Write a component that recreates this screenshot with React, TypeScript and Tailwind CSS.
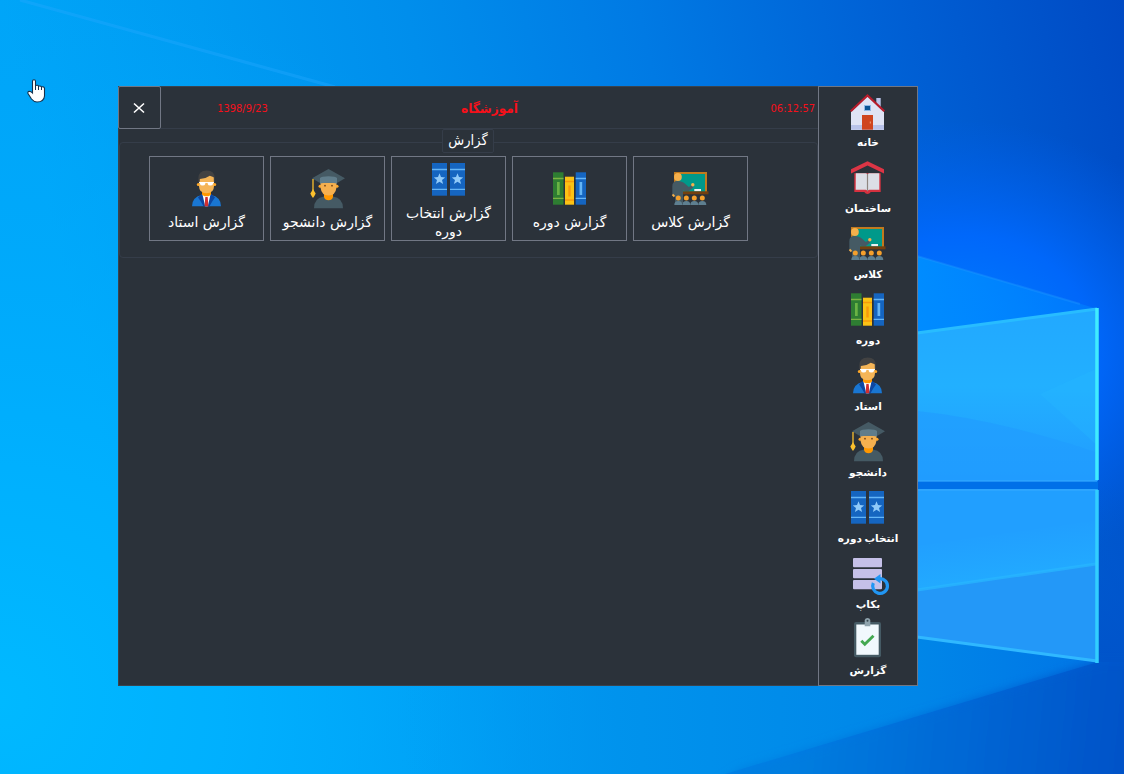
import type { ReactNode } from "react";

function Icon({ children }: { children: ReactNode }) {
  return (
    <svg width="40" height="40" viewBox="0 0 40 40" className="block shrink-0 overflow-visible">
      {children}
    </svg>
  );
}

function HomeIcon() {
  return (
    <Icon>
      <path d="M28.3 6h4.4v10h-4.4z" fill="#b9c3ea" />
      <path d="M19.5 4L3 19.5V38h33V19.5z" fill="#dfe3f5" />
      <path d="M3 33h33v4.7H3z" fill="#b9c3ea" />
      <path d="M14 23h11v14.7H14z" fill="#cf4520" />
      <path d="M22.3 29.5v2" stroke="#f3a27c" strokeWidth="1" />
      <path d="M16 13h7v6h-7z" fill="#8fb8e8" />
      <path d="M17 14h5v4h-5z" fill="#0b5394" />
      <path d="M2.7 19.2L19.5 3.4l16.8 15.8" fill="none" stroke="#b71c2c" strokeWidth="2.2" />
    </Icon>
  );
}

function BuildingIcon() {
  return (
    <Icon>
      <path d="M3 11.3l16.5-8 16.5 8v4.2l-16.5-8-16.5 8z" fill="#dc3545" />
      <path d="M6.3 15.3h26.4V34h-9.9q-1.5 1.9-3.3 1.9T16.2 34H6.3z" fill="#d5313f" />
      <path d="M7.8 15.2h10q1.7 0 1.7 1.6 0-1.6 1.7-1.6h10.1v16.5h-10q-1.8 0-1.8 1.8 0-1.8-1.8-1.8h-10z" fill="#dcdee6" />
      <path d="M19.5 16v17" stroke="#8f8580" strokeWidth="1.2" />
    </Icon>
  );
}

function ClassIcon() {
  return (
    <Icon>
      <path d="M3 3h33v20H3z" fill="#c17a1e" />
      <path d="M5 5h29v18H5z" fill="#00998a" />
      <path d="M1.3 26V17.500q0-5.500 5-5.500 5 0 7.500 2.500l4 3.500 3-2 1.500 2.500-4.500 3.500q-3 .5-5.800-.5V34H4V26z" fill="#455a64" />
      <circle cx="6.900" cy="8" r="3.900" fill="#f5b04c" />
      <circle cx="21.800" cy="15.700" r="1.700" fill="#f5b04c" />
      <path d="M1.500 25.500l2 2" stroke="#f5b04c" strokeWidth="1.800" />
      <path d="M23.300 20H30v2.300h-6.700z" fill="#eceff1" />
      <path d="M12 22.300h25.500v3H12z" fill="#74400f" />
      {[7.3, 15.3, 23.3, 31.3].map((x) => (
        <g key={x} transform={`translate(${x} 29)`}>
          <circle r="2.500" fill="#f5a02c" />
          <path d="M-4 7q0-4 4-4t4 4z" fill="#5e7f90" />
        </g>
      ))}
    </Icon>
  );
}

function CourseIcon() {
  return (
    <Icon>
      <path d="M3 3.300h10.500v32.400H3z" fill="#2e7d32" />
      <path d="M3 9.500h10.500M3 29.300h10.500" stroke="#7cb342" strokeWidth="1.300" />
      <path d="M7 13h2.700v13H7z" fill="#6ab344" />
      <path d="M15 7.700h9v28h-9z" fill="#fbc215" />
      <path d="M15 12.500h9M15 31h9" stroke="#f79a0b" strokeWidth="1.500" />
      <path d="M18.300 16.500h2.400v11h-2.400z" fill="#f79a0b" />
      <path d="M25.700 3.300H36v32.400H25.700z" fill="#1565c0" />
      <path d="M25.700 9.500H36M25.700 29.300H36" stroke="#64b5f6" strokeWidth="1.300" />
      <path d="M29.500 13h2.700v13h-2.700z" fill="#64b5f6" />
    </Icon>
  );
}

function TeacherIcon() {
  return (
    <Icon>
      <path d="M5 37.300q0-9 9.500-11.300h10Q34 28.300 34 37.300z" fill="#1976d2" />
      <path d="M14.500 25h10l3.500 3.500-2.500 3.500-3 5.300h-6L13.500 32 11 28.500z" fill="#0d47a1" />
      <path d="M15.500 25.500h8l-2.700 11.800h-2.600z" fill="#fff" />
      <path d="M18.300 28h2.400l.7 9.300h-3.800z" fill="#d32f2f" />
      <path d="M15 20h9v5.700l-2.500 1.600h-4L15 25.700z" fill="#ff9800" />
      <circle cx="11.300" cy="15.500" r="1.500" fill="#ffa726" />
      <circle cx="27.700" cy="15.500" r="1.500" fill="#ffa726" />
      <path d="M12 9q0-4 7.500-4T27 9v8q0 7.300-7.500 7.300T12 17z" fill="#f5b557" />
      <path d="M11.300 13.500V9.500q0-8 8.500-8 8 0 8 8v4l-1-1V8.300l-4-1.500q-4 3-10 3.300v2.500z" fill="#424242" />
      <path d="M12 13h15v.9H12z" fill="#fff" />
      <path d="M13 13h5.300v2q-.5 1.500-2.700 1.500T13 15zM20.700 13H26v2q-.5 1.500-2.700 1.500T20.700 15z" fill="#fff" />
    </Icon>
  );
}

function StudentIcon() {
  return (
    <Icon>
      <path d="M6 39.300Q6 29 16 27.500h9Q35 29 35 39.300z" fill="#455a64" />
      <path d="M16 23h9v5q-1 3.200-4.500 3.200T16 28z" fill="#ff9800" />
      <circle cx="12" cy="17.300" r="1.500" fill="#ffa726" />
      <circle cx="29" cy="17.300" r="1.500" fill="#ffa726" />
      <path d="M12.500 12h16v6.500q-1 8-8 8t-8-8z" fill="#f5b04f" />
      <path d="M4 9.300L20.500 0 37 9.300l-7.500 4.500h-18z" fill="#455a64" />
      <path d="M12 9q1.500-1.800 8.500-1.800T29 9v5.500q-3-.8-8.500-.8t-8.500.8z" fill="#607d8b" />
      <circle cx="17" cy="16.700" r=".9" fill="#784719" />
      <circle cx="24" cy="16.700" r=".9" fill="#784719" />
      <path d="M5 10v12" stroke="#fbc02d" strokeWidth="1.300" />
      <path d="M5 20q1.300 2.500 2.700 4.500-.9 2.200-2.700 4.500-1.800-2.300-2.700-4.500Q3.700 22.500 5 20z" fill="#fbc02d" />
    </Icon>
  );
}

function SelectIcon() {
  return (
    <Icon>
      {[3, 21].map((x) => (
        <g key={x} transform={`translate(${x} 0)`}>
          <path d="M0 3h15v32.700H0z" fill="#1565c0" />
          <path d="M0 9.500h15M0 29.300h15" stroke="#64b5f6" strokeWidth="1.300" />
          <path d="M7.500 13.300l1.500 3.800 4.200.3-3.200 2.600 1.100 4.100-3.600-2.300-3.600 2.300 1.100-4.100-3.200-2.600 4.200-.3z" fill="#90caf9" />
        </g>
      ))}
    </Icon>
  );
}

function BackupIcon() {
  return (
    <Icon>
      {[4, 15, 26].map((y) => (
        <rect key={y} x="5" y={y} width="29" height="9.200" rx="1" fill="#c5c0e8" />
      ))}
      <path d="M25.300 29a7.400 7.400 0 1 0 6.700-4.400h-1" fill="none" stroke="#2196f3" strokeWidth="3.200" />
      <path d="M32.500 19.900v9.600L26 24.700z" fill="#2196f3" />
    </Icon>
  );
}

function ReportIcon() {
  return (
    <Icon>
      <rect x="6" y="2" width="27" height="35.300" rx="2" fill="#455a64" />
      <path d="M8.300 4.500h22.400v30.300H8.300z" fill="#f1f8fd" />
      <path d="M16.700 6.300V0q.6-2 2.800-2t2.800 2v6.300z" fill="#90a4ae" />
      <circle cx="19.500" cy=".8" r="1" fill="#37474f" />
      <path d="M13.300 20.800l3.500 3.500 8.700-8.500" fill="none" stroke="#43a851" strokeWidth="2.900" />
    </Icon>
  );
}

const menu = [
  { label: "خانه", icon: <HomeIcon /> },
  { label: "ساختمان", icon: <BuildingIcon /> },
  { label: "کلاس", icon: <ClassIcon /> },
  { label: "دوره", icon: <CourseIcon /> },
  { label: "استاد", icon: <TeacherIcon /> },
  { label: "دانشجو", icon: <StudentIcon /> },
  { label: "انتخاب دوره", icon: <SelectIcon /> },
  { label: "بکاپ", icon: <BackupIcon /> },
  { label: "گزارش", icon: <ReportIcon /> },
];

const reports = [
  { lines: ["گزارش استاد"], icon: <TeacherIcon /> },
  { lines: ["گزارش دانشجو"], icon: <StudentIcon /> },
  { lines: ["گزارش انتخاب", "دوره"], icon: <SelectIcon /> },
  { lines: ["گزارش دوره"], icon: <CourseIcon /> },
  { lines: ["گزارش کلاس"], icon: <ClassIcon /> },
];

function Wallpaper() {
  return (
    <svg className="absolute inset-0" width="1124" height="774" viewBox="0 0 1124 774">
      <defs>
        <linearGradient id="base" gradientUnits="userSpaceOnUse" x1="0" y1="0" x2="1100" y2="-250">
          <stop offset="0" stopColor="#00a5f8" />
          <stop offset=".17" stopColor="#009bf2" />
          <stop offset=".35" stopColor="#008eec" />
          <stop offset=".55" stopColor="#007ae4" />
          <stop offset=".75" stopColor="#0062d6" />
          <stop offset=".97" stopColor="#004ac4" />
        </linearGradient>
        <radialGradient id="corner" gradientUnits="userSpaceOnUse" cx="0" cy="700" r="720">
          <stop offset="0" stopColor="#00b9ff" />
          <stop offset=".3" stopColor="#00b2ff" stopOpacity=".9" />
          <stop offset="1" stopColor="#00a8fc" stopOpacity="0" />
        </radialGradient>
        <radialGradient id="glow" gradientUnits="userSpaceOnUse" cx="0" cy="0" r="1" gradientTransform="translate(960 350) scale(270 230)">
          <stop offset="0" stopColor="#0080ff" />
          <stop offset=".5" stopColor="#0069ff" stopOpacity=".9" />
          <stop offset="1" stopColor="#0060f0" stopOpacity="0" />
        </radialGradient>
        <linearGradient id="beam" x1="0" y1="0" x2="1" y2="0">
          <stop offset="0" stopColor="#008cff" />
          <stop offset="1" stopColor="#0086ff" stopOpacity=".5" />
        </linearGradient>
        <linearGradient id="shade" gradientUnits="userSpaceOnUse" x1="790" y1="740" x2="1124" y2="774">
          <stop offset="0" stopColor="#007ee0" />
          <stop offset=".5" stopColor="#0068d5" />
          <stop offset="1" stopColor="#0052c8" />
        </linearGradient>
        <linearGradient id="lower" gradientUnits="userSpaceOnUse" x1="400" y1="0" x2="1090" y2="0">
          <stop offset="0" stopColor="#00a0f4" stopOpacity="0" />
          <stop offset=".35" stopColor="#0092ec" />
          <stop offset=".75" stopColor="#0086e8" />
          <stop offset="1" stopColor="#0076e6" />
        </linearGradient>
        <linearGradient id="fade" x1="0" y1="0" x2="0" y2="1">
          <stop offset="0" stopColor="#0058d0" stopOpacity="0" />
          <stop offset="1" stopColor="#0054ca" />
        </linearGradient>
        <linearGradient id="pane" x1="0" y1="0" x2="0" y2="1">
          <stop offset="0" stopColor="#22a8ff" />
          <stop offset=".45" stopColor="#22b0ff" />
          <stop offset="1" stopColor="#219bff" />
        </linearGradient>
        <linearGradient id="sheen" gradientUnits="userSpaceOnUse" x1="1000" y1="530" x2="1006" y2="576">
          <stop offset="0" stopColor="#22aaff" stopOpacity="0" />
          <stop offset="1" stopColor="#22acff" stopOpacity=".8" />
        </linearGradient>
        <filter id="soften" x="-10%" y="-20%" width="120%" height="140%">
          <feGaussianBlur stdDeviation="5" />
        </filter>
      </defs>
      <path d="M0 0h1124v774H0z" fill="url(#base)" />
      <path d="M0 0h1124v774H0z" fill="url(#corner)" />
      <path d="M0 0h1124v774H0z" fill="url(#glow)" />
      <path d="M20 0L335 87" stroke="#25a8ff" strokeWidth="3" opacity=".4" />
      <path d="M917 256L1098 309 917 334z" fill="url(#beam)" />
      <path d="M917 256L1080 304" stroke="#2499ff" strokeWidth="2" opacity=".35" />
      <path d="M1098 480h26v182h-26z" fill="url(#fade)" />
      <path d="M917 637l181 25L725 774H400v-88h517z" fill="url(#lower)" />
      <path d="M1098 662h60v140H690l50-32z" fill="url(#shade)" filter="url(#soften)" />
      <path d="M917 333l181-25v173H917z" fill="url(#pane)" />
      <path d="M917 411q80 8 181 42v28H917z" fill="#219dff" opacity=".7" />
      <path d="M1040 394l58-26v78z" fill="#24b8ff" opacity=".35" />
      <path d="M917 481h181v8H917z" fill="#0070e8" />
      <path d="M917 489h181v173l-181-25z" fill="#219fff" />
      <path d="M917 546l181-26v44l-181 26z" fill="url(#sheen)" />
      <path d="M917 590l181-26v98l-181-25z" fill="#2398f8" />
      <path d="M917 590l179-26" stroke="#29b8ff" strokeWidth="3" opacity=".7" />
      <path d="M917 481h180M917 490h180" stroke="#35a9ff" strokeWidth="1.500" opacity=".8" />
      <path d="M917 333l180-24" stroke="#28bcff" strokeWidth="3" />
      <path d="M917 637l180 24" stroke="#30b8ff" strokeWidth="3" />
      <path d="M1097 308v172" stroke="#40ecff" strokeWidth="3.500" />
      <path d="M1097 490v173" stroke="#32ceff" strokeWidth="3.500" />
    </svg>
  );
}

function Pointer() {
  return (
    <svg className="absolute left-[27px] top-[79px]" width="19" height="25" viewBox="0 0 19 25">
      <path
        d="M5.500 14V2.300Q5.500.8 7 .8t1.500 1.500v4.200q2.700-.8 3 .7 2.300-.6 3 .7 2.800-.5 3 1.600V17q-.5 6-7.500 6-3 0-5.500-3L1 14.500q-.5-2 1.200-2.200Q4 12.300 5.500 14z"
        fill="#fff"
        stroke="#17304a"
        strokeWidth="1.100"
      />
      <path d="M8.500 6.500V11M11.500 7v4M14.500 8v3" stroke="#17304a" strokeWidth="1" />
    </svg>
  );
}

export default function App() {
  return (
    <div className="relative h-[774px] w-[1124px] overflow-hidden bg-[#0090ee] pl-[118px] pt-[86px] font-['DejaVu_Sans',sans-serif] text-white">
      <Wallpaper />
      <Pointer />
      <div className="relative flex h-[600px] w-[800px] bg-[#2b323a]">
        <main className="flex w-[700px] flex-col border border-r-0 border-[#39434e]">
          <header className="-ml-px -mt-px flex h-[43px] shrink-0 items-center border-b border-[#353d49] text-[11px] text-[#f5101a]">
            <button className="-mb-px flex size-[43px] shrink-0 items-center justify-center rounded-[2px] border border-[#717784] pt-px text-white">
              <svg width="12" height="12" viewBox="0 0 12 12" className="-translate-x-px">
                <path d="M1 1.500l10 9M11 1.500l-10 9" stroke="currentColor" strokeWidth="1.600" />
              </svg>
            </button>
            <time className="w-[163px] pt-[4px] text-center font-['DejaVu_Sans_Condensed']">1398/9/23</time>
            <h1 dir="rtl" className="flex-1 pt-[3px] text-center font-['DejaVu_Sans_Condensed'] text-[13.500px] font-bold">آموزشگاه</h1>
            <time className="w-[163px] pr-[3px] pt-[4px] text-right font-['DejaVu_Sans_Condensed']">06:12:57</time>
          </header>
          <section dir="rtl" className="relative mt-[13px] h-[116px] rounded-[4px] border border-[#353d49]">
            <h2 className="absolute left-[322px] top-[-14px] flex h-[24px] w-[52px] items-center justify-center rounded-[2px] border border-[#353d49] bg-[#2b323a] pb-px font-['DejaVu_Sans_Condensed'] text-[14.500px]">
              گزارش
            </h2>
            <div dir="ltr" className="flex gap-[6px] pl-[29px] pt-[13px]">
              {reports.map((r) => (
                <button key={r.lines[0]} className="flex h-[85px] w-[115px] flex-col items-center justify-center border border-[#717784] pt-[3px] text-[14px] leading-[18px]">
                  {r.icon}
                  <span dir="rtl" className="mt-[4px] block whitespace-nowrap">
                    {r.lines.map((line) => (
                      <span key={line} className="block">{line}</span>
                    ))}
                  </span>
                </button>
              ))}
            </div>
          </section>
        </main>
        <nav className="flex w-[100px] flex-col border border-[#717784] pt-[5px]">
          {menu.map((m) => (
            <button key={m.label} className="flex h-[66px] shrink-0 flex-col items-center text-[10.500px] font-bold leading-[16px] [word-spacing:-1px]">
              {m.icon}
              <span dir="rtl" className="mt-[2px] whitespace-nowrap">{m.label}</span>
            </button>
          ))}
        </nav>
      </div>
    </div>
  );
}
